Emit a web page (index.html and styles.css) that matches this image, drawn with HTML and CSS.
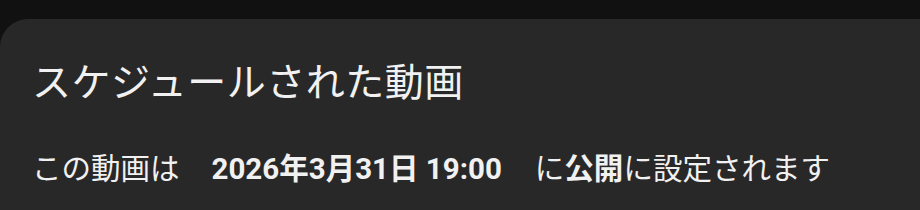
FILE: index.html
```html
<!DOCTYPE html>
<html lang="ja">
<head>
  <meta charset="UTF-8">
  <title>スケジュールされた動画</title>
  <link rel="stylesheet" href="styles.css">
</head>
<body>
  <div class="sheet">
    <h1 class="sheet-title">スケジュールされた動画</h1>
    <p class="sheet-text">
      <span>この動画は</span><span class="date">2026年3月31日 19:00</span><span>に<strong>公開</strong>に設定されます</span>
    </p>
  </div>
</body>
</html>
```
FILE: styles.css
```css
* {
  margin: 0;
  padding: 0;
  box-sizing: border-box;
}

body {
  background: #111111;
  font-family: Roboto, "Noto Sans CJK JP", sans-serif;
  color: #f1f1f1;
  width: 920px;
  height: 210px;
  overflow: hidden;
}

.sheet {
  margin-top: 19px;
  background: #282828;
  border-top-left-radius: 28px;
  height: 191px;
  padding: 38px 0 0 32px;
}

.sheet-title {
  font-size: 39px;
  font-weight: 400;
  letter-spacing: 0.5px;
  line-height: 52px;
}

.sheet-text {
  margin-top: 40px;
  font-size: 29.5px;
  line-height: 40px;
  display: flex;
}

.sheet-text strong,
.sheet-text .date {
  font-weight: 700;
}

.sheet-text .date {
  margin: 0 33px 0 32px;
}
```
